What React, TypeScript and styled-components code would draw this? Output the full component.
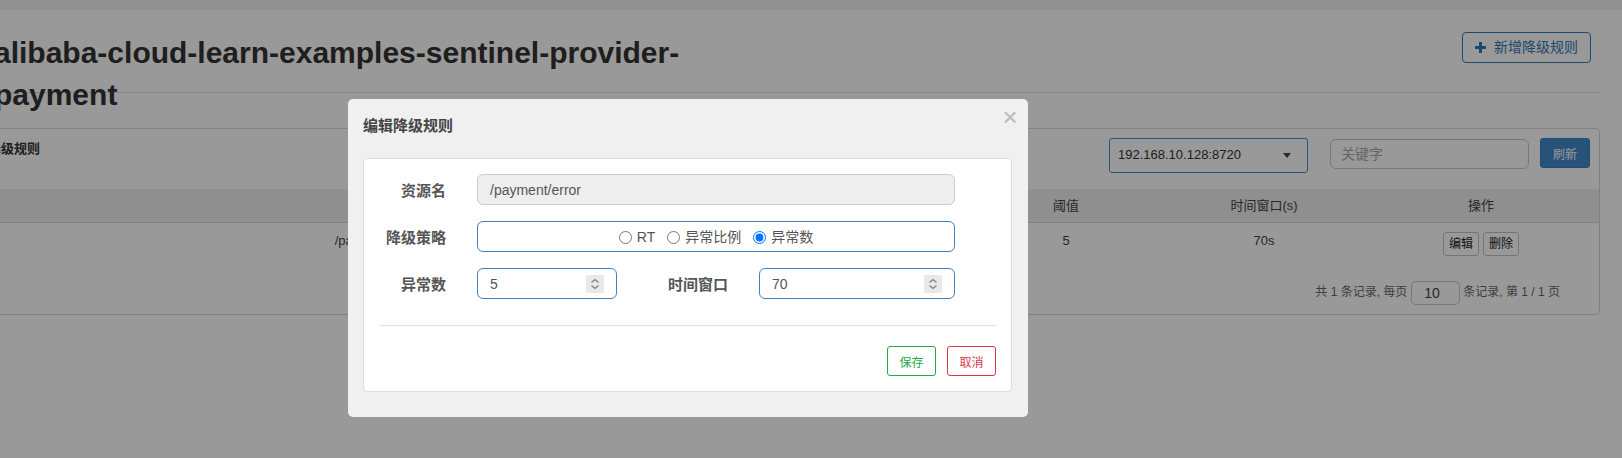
import React from "react";
import styled, { createGlobalStyle } from "styled-components";

const Global = createGlobalStyle`
  html, body { margin: 0; padding: 0; background: #fff; }
  body {
    font-family: "Liberation Sans", "Noto Sans CJK SC", sans-serif;
    color: #333;
    font-size: 14px;
    line-height: 1.42857;
    overflow: hidden;
  }
  * { box-sizing: border-box; }
`;

const TopBand = styled.div`
  height: 10px;
  background: #f2f2f2;
`;

const Content = styled.div`
  margin-left: -28px;
  width: 1628px;
`;

const Header = styled.div`
  height: 83px;
  border-bottom: 1px solid #dcdcdc;
  display: flex;
  justify-content: space-between;
  align-items: flex-start;
  padding: 0 9px 0 22px;
`;

const Title = styled.h1`
  margin: 21.5px 0 0;
  width: 720px;
  font-size: 30px;
  font-weight: 700;
  line-height: 1.42857;
  color: #333;
`;

const OutlineButton = styled.button`
  margin-top: 22px;
  height: 31px;
  display: flex;
  align-items: center;
  gap: 8px;
  padding: 0 12px;
  border: 1px solid #337ab7;
  border-radius: 4px;
  background: #fff;
  color: #337ab7;
  font-family: inherit;
  font-size: 14px;
  line-height: 19px;
`;

const Panel = styled.div`
  margin-top: 35px;
  border: 1px solid #d6d6d6;
  border-radius: 4px;
  background: #fff;
`;

const PanelHeading = styled.div`
  display: flex;
  justify-content: space-between;
  align-items: flex-start;
  padding: 9px 9px 16px 15px;
`;

const PanelTitle = styled.div`
  font-size: 13px;
  font-weight: 700;
  line-height: 21px;
  color: #333;
`;

const Tools = styled.div`
  display: flex;
  align-items: flex-start;
`;

const SelectBox = styled.div`
  width: 199px;
  height: 35px;
  border: 1px solid #4a8ccc;
  border-radius: 3px;
  display: flex;
  align-items: center;
  justify-content: space-between;
  padding: 0 16px 0 8px;
  font-size: 13px;
  color: #333;
`;

const Caret = styled.span`
  width: 0;
  height: 0;
  border-left: 4.5px solid transparent;
  border-right: 4.5px solid transparent;
  border-top: 5px solid #444;
`;

const SearchInput = styled.input`
  margin: 1px 0 0 22px;
  width: 199px;
  height: 30px;
  border: 1px solid #c8c8c8;
  border-radius: 6px;
  padding: 0 10px;
  font-family: inherit;
  font-size: 14px;
  outline: none;
  &::placeholder { color: #aaa; }
`;

const PrimaryButton = styled.button`
  margin-left: 11px;
  width: 50px;
  height: 30px;
  border: 1px solid #3a7fc0;
  border-radius: 3px;
  background: #428bca;
  color: #fff;
  font-family: inherit;
  font-size: 12px;
  padding: 0;
`;

const Table = styled.div`
  display: grid;
  grid-template-columns: 808px 186px 198px 198px 1fr;
`;

const HeadCell = styled.div`
  height: 34px;
  background: #eeeef0;
  border-bottom: 1px solid #d5d5d5;
  padding: 7px 8px;
  font-size: 13px;
  line-height: 19px;
  text-align: center;
  color: #444;
`;

const Cell = styled.div`
  padding: 9px 8px 7px;
  height: 40px;
  font-size: 13px;
  line-height: 18px;
  text-align: center;
  color: #444;
`;

const ActionCell = styled(Cell)`
  display: flex;
  justify-content: center;
  gap: 4px;
  padding-top: 8.5px;
`;

const SmallButton = styled.button`
  height: 24px;
  padding: 0 5px;
  border: 1px solid #c4c4c4;
  border-radius: 3px;
  background: #fff;
  color: #222;
  font-family: inherit;
  font-size: 12px;
  line-height: 22px;
`;

const Pager = styled.div`
  display: flex;
  justify-content: flex-end;
  align-items: center;
  margin-top: 18px;
  padding: 0 39px 9px 0;
  font-size: 12px;
  color: #666;
`;

const PagerInput = styled.input`
  width: 49px;
  height: 24px;
  margin: 0 3px 0 4px;
  border: 1px solid #c8c8c8;
  border-radius: 5px;
  padding: 0 12px;
  font-family: inherit;
  font-size: 14px;
  color: #444;
  outline: none;
`;

const Backdrop = styled.div`
  position: fixed;
  inset: 0;
  background: rgba(0, 0, 0, 0.4);
`;

const Dialog = styled.div`
  position: fixed;
  top: 99px;
  left: 348px;
  width: 680px;
  background: #f0f0f0;
  border-radius: 5px;
  padding: 16px 16px 25px 15px;
  color: #444;
`;

const Close = styled.button`
  position: absolute;
  top: 3px;
  right: 3px;
  width: 30px;
  height: 30px;
  border: none;
  background: transparent;
  color: #bbb;
  font-family: "Liberation Sans", sans-serif;
  font-size: 26px;
  line-height: 26px;
  padding: 0;
`;

const DialogTitle = styled.div`
  font-size: 15px;
  font-weight: 700;
  line-height: 22px;
  color: #444;
  margin-bottom: 21px;
`;

const FormPanel = styled.div`
  background: #fff;
  border: 1px solid #ddd;
  border-radius: 4px;
  padding: 15px;
`;

const FormRow = styled.div`
  display: flex;
  align-items: center;
  gap: 31px;
  height: 31px;
  & + & { margin-top: 16px; }
`;

const Label = styled.label<{ $w: number }>`
  width: ${(p) => p.$w}px;
  flex: none;
  text-align: right;
  font-size: 15px;
  font-weight: 700;
  color: #555;
  line-height: 20px;
  padding-top: 3px;
`;

const TextField = styled.input`
  width: 478px;
  height: 31px;
  border: 1px solid #ccc;
  border-radius: 6px;
  background: #eee;
  padding: 1px 12px 0;
  font-family: inherit;
  font-size: 14px;
  color: #555;
  outline: none;
`;

const RadioBox = styled.div`
  width: 478px;
  height: 31px;
  border: 1px solid #3d80c6;
  border-radius: 6px;
  display: flex;
  justify-content: center;
  align-items: center;
  gap: 12px;
  padding-top: 2px;
`;

const RadioOption = styled.label`
  display: flex;
  align-items: center;
  gap: 5px;
  font-size: 14px;
  color: #555;
  input { margin: 0; width: 13px; height: 13px; }
`;

const NumberBox = styled.div<{ $w: number }>`
  width: ${(p) => p.$w}px;
  height: 31px;
  border: 1px solid #3d80c6;
  border-radius: 6px;
  display: flex;
  align-items: center;
  padding: 0 12px;
`;

const NumberField = styled.input`
  flex: 1;
  min-width: 0;
  border: none;
  outline: none;
  padding: 0;
  font-family: inherit;
  font-size: 14px;
  color: #555;
  background: transparent;
  -moz-appearance: textfield;
  &::-webkit-inner-spin-button,
  &::-webkit-outer-spin-button { -webkit-appearance: none; margin: 0; }
`;

const Divider = styled.div`
  height: 1px;
  background: #e2e2e2;
  margin: 26px 0 20px;
`;

const Footer = styled.div`
  display: flex;
  justify-content: flex-end;
  gap: 11px;
`;

const FooterButton = styled.button<{ $tone: "ok" | "cancel" }>`
  height: 30px;
  width: 49px;
  padding: 0;
  border: 1px solid ${(p) => (p.$tone === "ok" ? "#28a745" : "#dc3545")};
  color: ${(p) => (p.$tone === "ok" ? "#28a745" : "#dc3545")};
  background: #fff;
  border-radius: 3px;
  font-family: inherit;
  font-size: 12px;
`;

const Stepper = () => (
  <svg width="18" height="18" viewBox="0 0 18 18">
    <rect width="18" height="18" rx="1" fill="#e9e9ed" />
    <path d="M5.5 7.5 L9 4.5 L12.5 7.5" fill="none" stroke="#7a7a7a" strokeWidth="1.1" />
    <path d="M5.5 10.5 L9 13.5 L12.5 10.5" fill="none" stroke="#7a7a7a" strokeWidth="1.1" />
  </svg>
);

const PlusIcon = () => (
  <svg width="11" height="11" viewBox="0 0 11 11">
    <rect x="0" y="4" width="11" height="3" fill="#337ab7" />
    <rect x="4" y="0" width="3" height="11" fill="#337ab7" />
  </svg>
);

export default function App() {
  return (
    <>
      <Global />
      <TopBand />
      <Content>
        <Header>
          <Title>alibaba-cloud-learn-examples-sentinel-provider-payment</Title>
          <OutlineButton>
            <PlusIcon />
            新增降级规则
          </OutlineButton>
        </Header>
        <Panel>
          <PanelHeading>
            <PanelTitle>降级规则</PanelTitle>
            <Tools>
              <SelectBox>
                <span>192.168.10.128:8720</span>
                <Caret />
              </SelectBox>
              <SearchInput placeholder="关键字" />
              <PrimaryButton>刷新</PrimaryButton>
            </Tools>
          </PanelHeading>
          <Table>
            <HeadCell>资源名</HeadCell>
            <HeadCell>降级策略</HeadCell>
            <HeadCell>阈值</HeadCell>
            <HeadCell>时间窗口(s)</HeadCell>
            <HeadCell>操作</HeadCell>
            <Cell>/payment/error</Cell>
            <Cell>异常数</Cell>
            <Cell>5</Cell>
            <Cell>70s</Cell>
            <ActionCell>
              <SmallButton>编辑</SmallButton>
              <SmallButton>删除</SmallButton>
            </ActionCell>
          </Table>
          <Pager>
            <span>共 1 条记录, 每页</span>
            <PagerInput defaultValue="10" />
            <span>条记录, 第 1 / 1 页</span>
          </Pager>
        </Panel>
      </Content>
      <Backdrop />
      <Dialog>
        <Close>×</Close>
        <DialogTitle>编辑降级规则</DialogTitle>
        <FormPanel>
          <FormRow>
            <Label $w={67}>资源名</Label>
            <TextField readOnly value="/payment/error" />
          </FormRow>
          <FormRow>
            <Label $w={67}>降级策略</Label>
            <RadioBox>
              <RadioOption>
                <input type="radio" name="grade" />
                RT
              </RadioOption>
              <RadioOption>
                <input type="radio" name="grade" />
                异常比例
              </RadioOption>
              <RadioOption>
                <input type="radio" name="grade" defaultChecked />
                异常数
              </RadioOption>
            </RadioBox>
          </FormRow>
          <FormRow>
            <Label $w={67}>异常数</Label>
            <NumberBox $w={140}>
              <NumberField type="number" defaultValue={5} />
              <Stepper />
            </NumberBox>
            <Label $w={80}>时间窗口</Label>
            <NumberBox $w={196}>
              <NumberField type="number" defaultValue={70} />
              <Stepper />
            </NumberBox>
          </FormRow>
          <Divider />
          <Footer>
            <FooterButton $tone="ok">保存</FooterButton>
            <FooterButton $tone="cancel">取消</FooterButton>
          </Footer>
        </FormPanel>
      </Dialog>
    </>
  );
}
